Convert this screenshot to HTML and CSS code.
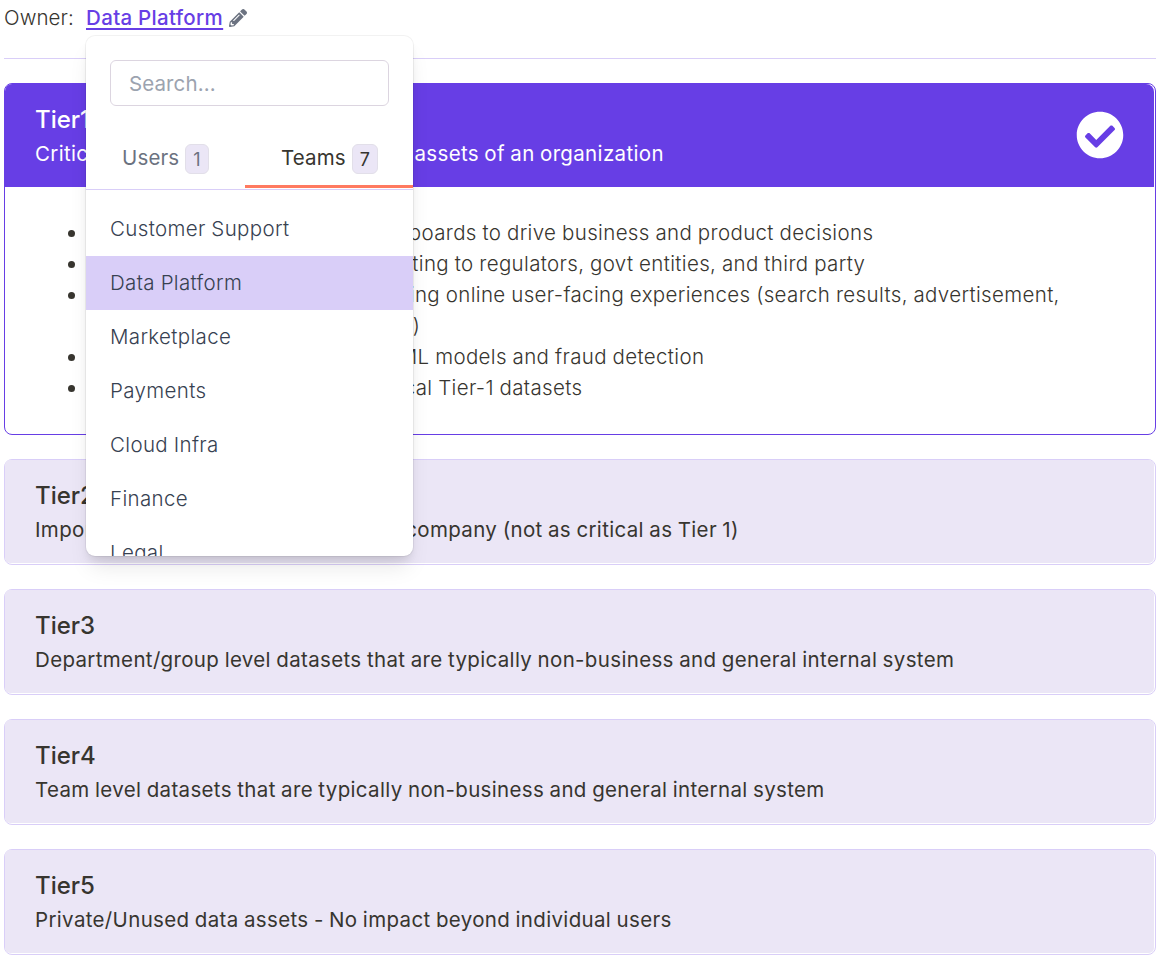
FILE: index.html
```html
<!DOCTYPE html>
<html lang="en">
<head>
<meta charset="utf-8">
<title>Manage</title>
<link rel="stylesheet" href="styles.css">
</head>
<body>
<div class="owner">
  <span class="owner-label">Owner:</span>
  <div class="owner-value">
    <a class="owner-link">Data Platform</a>
    <section class="dropdown">
      <div class="search">Search...</div>
      <div class="tabs">
        <div class="tab">Users <span class="count">1</span></div>
        <div class="tab active">Teams <span class="count">7</span></div>
      </div>
      <div class="options">
        <div class="option">Customer Support</div>
        <div class="option selected">Data Platform</div>
        <div class="option">Marketplace</div>
        <div class="option">Payments</div>
        <div class="option">Cloud Infra</div>
        <div class="option">Finance</div>
        <div class="option">Legal</div>
      </div>
    </section>
  </div>
  <svg class="pencil" viewBox="0 0 512 512"><path fill="#6b7280" d="M498 142l-46 46c-5 5-12 5-17 0L324 77c-5-5-5-12 0-17l46-46c19-19 49-19 68 0l60 60c19 19 19 49 0 68zm-214-42L22 362 0 484c-3 16 12 30 28 28l122-22 262-262c5-5 5-12 0-17L301 100c-4-5-12-5-17 0zM124 340c-5-6-5-14 0-20l154-154c6-5 14-5 20 0s5 14 0 20L144 340c-6 5-14 5-20 0zm-36 84h48v36l-64 12-32-31 12-65h36v48z"/></svg>
</div>
<div class="cards">
  <article class="card current">
    <header class="card-head">
      <div><h2>Tier1</h2><p>Critical Source of Truth business data assets of an organization</p></div>
      <svg class="check" viewBox="0 0 512 512"><path fill="#fff" d="M504 256c0 137-111 248-248 248S8 393 8 256 119 8 256 8s248 111 248 248zM227.300 387.300l184-184c6.200-6.200 6.200-16.400 0-22.600l-22.600-22.600c-6.200-6.200-16.400-6.200-22.600 0L216 308.100l-70.100-70.100c-6.200-6.200-16.400-6.200-22.600 0l-22.600 22.600c-6.200 6.200-6.200 16.400 0 22.600l104 104c6.200 6.200 16.400 6.200 22.600.1z"/></svg>
    </header>
    <ul>
      <li>Used in critical metrics and dashboards to drive business and product decisions</li>
      <li>Used in critical compliance reporting to regulators, govt entities, and third party</li>
      <li>Used in brand or revenue impacting online user-facing experiences (search results, advertisement, promotions, and experimentation)</li>
      <li>Other high impact use, such as ML models and fraud detection</li>
      <li>Source used to derive other critical Tier-1 datasets</li>
    </ul>
  </article>
  <article class="card"><header class="card-head"><div><h2>Tier2</h2><p>Important business datasets for your company (not as critical as Tier 1)</p></div></header></article>
  <article class="card"><header class="card-head"><div><h2>Tier3</h2><p>Department/group level datasets that are typically non-business and general internal system</p></div></header></article>
  <article class="card"><header class="card-head"><div><h2>Tier4</h2><p>Team level datasets that are typically non-business and general internal system</p></div></header></article>
  <article class="card"><header class="card-head"><div><h2>Tier5</h2><p>Private/Unused data assets - No impact beyond individual users</p></div></header></article>
</div>
</body>
</html>
```
FILE: styles.css
```css
* { box-sizing: border-box; }
body {
  margin: 0;
  padding: 0 6px 0 4px;
  height: 967px;
  overflow: hidden;
  font: 300 20.5px/31px Inter, sans-serif;
  letter-spacing: .35px;
  word-spacing: -.4px;
  color: #37352f;
  background: #fff;
}
.owner {
  display: flex;
  height: 59px;
  padding-top: 2px;
  border-bottom: 1px solid #d9cef8;
}
.owner-label { width: 82px; letter-spacing: .1px; }
.owner-value { position: relative; height: 31px; }
.owner-link { color: #673ee5; font-weight: 500; text-decoration: underline; text-decoration-thickness: 2px; text-underline-offset: 3px; }
.pencil { width: 18px; height: 18px; margin: 7px 0 0 6px; }
.dropdown {
  position: absolute;
  z-index: 2;
  top: 34px;
  left: 0;
  width: 327px;
  height: 520px;
  overflow: hidden;
  padding-top: 24px;
  border-radius: 9px;
  background: #fff;
  box-shadow: 0 0 0 1px rgba(0, 0, 0, .05), 0 15px 22px -5px rgba(0, 0, 0, .1), 0 6px 9px -3px rgba(0, 0, 0, .1);
}
.search {
  height: 46px;
  margin: 0 24px;
  padding: 7px 18px;
  border: 1px solid #dcd5e0;
  border-radius: 6px;
  color: #9ca3af;
  font-weight: 400;
  letter-spacing: .1px;
}
.tabs { display: flex; height: 84px; padding-top: 22px; border-bottom: 1px solid #d9cef8; }
.tab { display: flex; gap: 6px; width: 159px; height: 60px; padding: 14px 0 0 36px; color: #6b7280; font-weight: 400; letter-spacing: .15px; }
.tab.active { width: 168px; color: #37352f; border-bottom: 3px solid #ff7a60; }
.count {
  height: 30px;
  margin-top: 2px;
  padding: 0 7px;
  border: 1px solid #e2dfe9;
  border-radius: 6px;
  background: #ebe6f6;
  font-size: 18px;
  line-height: 29px;
  letter-spacing: -.1px;
}
.options { padding-top: 12px; }
.option { height: 54px; padding: 11px 24px; color: #374151; }
.option.selected { background: #d9cef8; }
.cards { display: flex; flex-direction: column; gap: 24px; padding-top: 24px; }
.card { height: 106px; border: 1px solid #d9cef8; border-radius: 8px; background: #fff; }
.card-head {
  display: flex;
  justify-content: space-between;
  align-items: center;
  height: 103px;
  margin-right: 1px;
  padding: 3px 30px 0;
  border-radius: 5px;
  background: #ebe6f6;
}
.card h2 { margin: 0; font-size: 24px; line-height: 34px; font-weight: 500; letter-spacing: 0; }
.card p { margin: 0; line-height: 34px; font-weight: 400; letter-spacing: .34px; word-spacing: -.7px; }
.current { height: 352px; border-color: #673ee5; }
.current .card-head { padding-top: 2px; border-radius: 7px 8px 0 0; color: #fff; background: #673ee5; }
.check { width: 48px; height: 48px; margin-top: -3px; }
.current ul { margin: 0; padding: 30px 60px 0 84px; }
.current li::marker { font-size: 23px; }
```
